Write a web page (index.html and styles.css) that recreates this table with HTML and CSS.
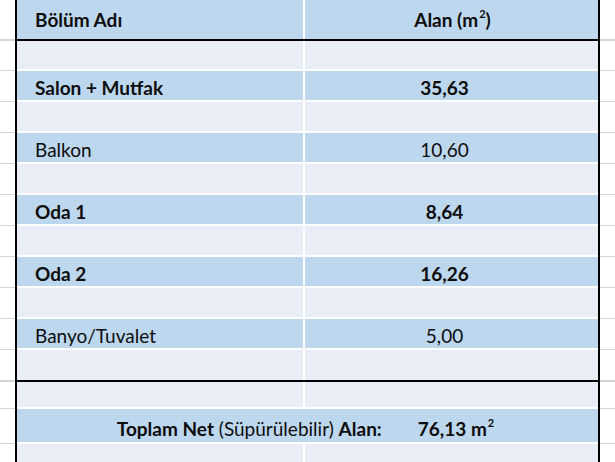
FILE: index.html
```html
<!DOCTYPE html>
<html lang="tr">
<head>
<meta charset="utf-8">
<title>Alan Tablosu</title>
<link rel="stylesheet" href="styles.css">
</head>
<body>
<div class="sheet">
  <div class="row head blue">
    <div class="gut"></div>
    <div class="cell c1 b">Bölüm Adı</div>
    <div class="cell c2 b hdr"><span>Alan (m<span class="sup">2</span>)</span></div>
    <div class="gut"></div>
  </div>
  <div class="row rule">
    <div class="gut"></div>
    <div class="bar"></div>
    <div class="gut"></div>
  </div>
  <div class="row light first">
    <div class="gut"></div><div class="cell c1"></div><div class="cell c2"></div><div class="gut"></div>
  </div>
  <div class="row blue">
    <div class="gut"></div><div class="cell c1 b">Salon + Mutfak</div><div class="cell c2 b">35,63</div><div class="gut"></div>
  </div>
  <div class="row light">
    <div class="gut"></div><div class="cell c1"></div><div class="cell c2"></div><div class="gut"></div>
  </div>
  <div class="row blue">
    <div class="gut"></div><div class="cell c1">Balkon</div><div class="cell c2">10,60</div><div class="gut"></div>
  </div>
  <div class="row light">
    <div class="gut"></div><div class="cell c1"></div><div class="cell c2"></div><div class="gut"></div>
  </div>
  <div class="row blue">
    <div class="gut"></div><div class="cell c1 b">Oda 1</div><div class="cell c2 b">8,64</div><div class="gut"></div>
  </div>
  <div class="row light">
    <div class="gut"></div><div class="cell c1"></div><div class="cell c2"></div><div class="gut"></div>
  </div>
  <div class="row blue">
    <div class="gut"></div><div class="cell c1 b">Oda 2</div><div class="cell c2 b">16,26</div><div class="gut"></div>
  </div>
  <div class="row light">
    <div class="gut"></div><div class="cell c1"></div><div class="cell c2"></div><div class="gut"></div>
  </div>
  <div class="row blue">
    <div class="gut"></div><div class="cell c1">Banyo/Tuvalet</div><div class="cell c2">5,00</div><div class="gut"></div>
  </div>
  <div class="row light last">
    <div class="gut"></div><div class="cell c1"></div><div class="cell c2"></div><div class="gut"></div>
  </div>
  <div class="row rule">
    <div class="gut"></div>
    <div class="bar"></div>
    <div class="gut"></div>
  </div>
  <div class="row light short">
    <div class="gut"></div><div class="cell c1"></div><div class="cell c2"></div><div class="gut"></div>
  </div>
  <div class="row blue total">
    <div class="gut"></div>
    <div class="cell merged">
      <span class="label"><span class="b">Toplam Net</span> (Süpürülebilir) <span class="b">Alan:</span></span>
      <span class="value b">76,13 m<span class="sup">2</span></span>
    </div>
    <div class="gut"></div>
  </div>
  <div class="row light">
    <div class="gut"></div><div class="cell c1"></div><div class="cell c2"></div><div class="gut"></div>
  </div>
</div>
</body>
</html>
```
FILE: styles.css
```css
html, body {
  margin: 0;
  padding: 0;
  background: #ffffff;
}

body {
  font-family: Lato, "Open Sans", "Liberation Sans", sans-serif;
  font-size: 19px;
  color: #0d0d0d;
  overflow: hidden;
}

.sheet {
  width: 615px;
}

.row {
  display: grid;
  grid-template-columns: 15px 290px 295px 15px;
  height: 31px;
}

.gut {
  box-sizing: border-box;
  border-bottom: 1px solid #d4d4d4;
}

.cell {
  box-sizing: border-box;
  display: flex;
  align-items: center;
  padding-top: 2px;
  box-shadow: inset 0 -2px 0 #ffffff;
  white-space: nowrap;
}

.c1 {
  border-left: 2px solid #000000;
  border-right: 2px solid #ffffff;
  padding-left: 18px;
}

.c2 {
  border-right: 2px solid #000000;
  justify-content: center;
  padding-right: 14px;
}

.c2.hdr {
  padding-right: 0;
  padding-left: 2px;
}

.blue .cell {
  background: #bdd7ee;
}

.light .cell {
  background: #e9edf5;
}

.b {
  font-weight: 700;
}

.sup {
  font-size: 11px;
  line-height: 1;
  vertical-align: 9px;
  margin-left: 1px;
}

/* header */
.head {
  height: 39px;
}

.head .cell {
  box-shadow: none;
  padding-top: 0;
}

.head .gut {
  border-bottom: none;
}

/* thick black rule */
.rule {
  height: 2px;
  grid-template-columns: 15px 585px 15px;
}

.rule .gut {
  border-bottom: none;
  background: #d4d4d4;
}

.bar {
  background: #000000;
}

.first {
  height: 30px;
}

.last {
  height: 30px;
}

.last .cell {
  box-shadow: none;
}

.last .gut {
  border-bottom: none;
}

.short {
  height: 27px;
}

/* total row */
.total {
  height: 35px;
  grid-template-columns: 15px 585px 15px;
}

.merged {
  border-left: 2px solid #000000;
  border-right: 2px solid #000000;
  justify-content: center;
  gap: 36px;
  padding-top: 3px;
  padding-right: 4px;
}
```
